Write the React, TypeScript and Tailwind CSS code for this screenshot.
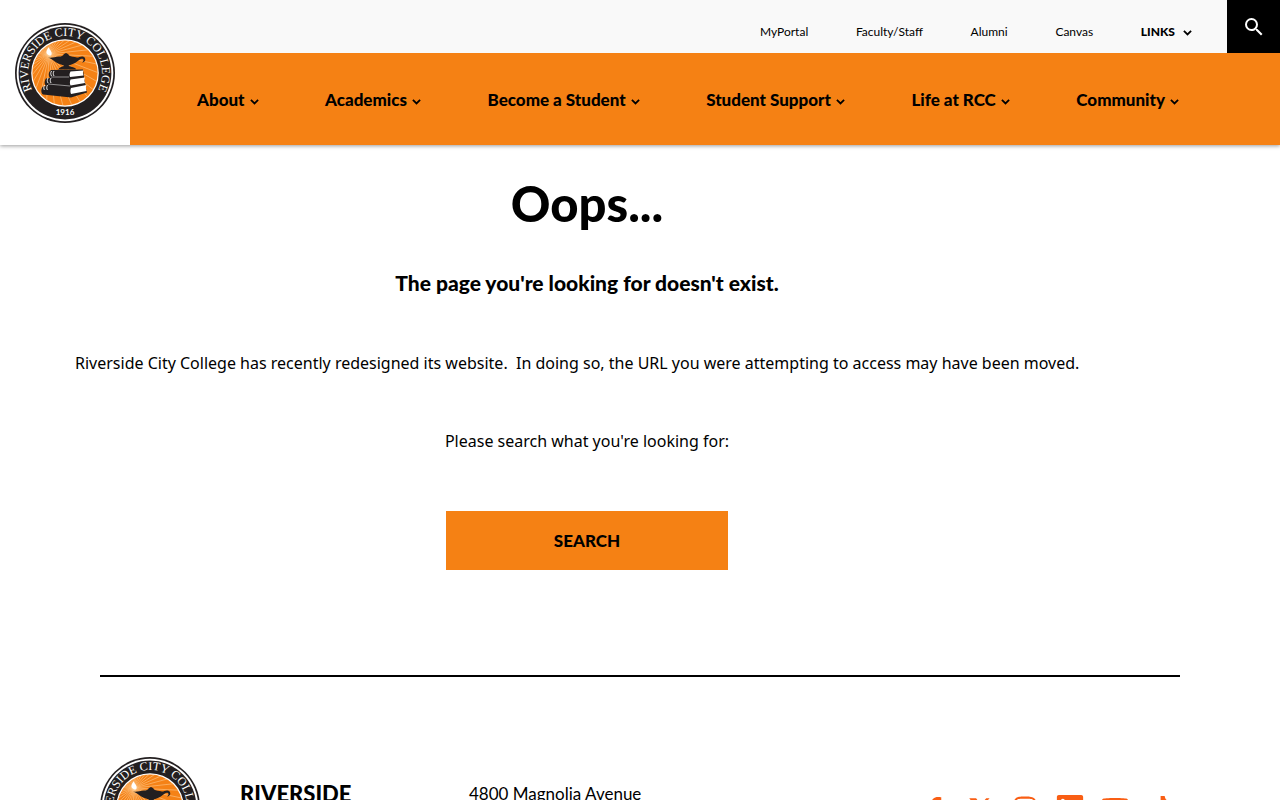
import { useId } from "react";
import { FaFacebookF, FaInstagram, FaLinkedin, FaTiktok, FaXTwitter, FaYoutube } from "react-icons/fa6";
import { MdSearch } from "react-icons/md";

const rays = Array.from({ length: 40 }, (_, i) => {
  const angle = (i * Math.PI * 2) / 40 + 0.05;
  return { x: 34 + Math.cos(angle) * 80, y: 31 + Math.sin(angle) * 80 };
});

function Seal() {
  const id = useId();
  return (
    <svg viewBox="0 0 100 100" className="size-[100px] shrink-0" role="img" aria-label="Riverside City College seal">
      <defs>
        <path id={`${id}-top`} d="M 24.3 76.600 A 37 37 0 1 1 75.700 76.600" />
        <clipPath id={`${id}-clip`}>
          <circle cx="50" cy="50" r="32.6" />
        </clipPath>
      </defs>
      <circle cx="50" cy="50" r="50" fill="#231f20" />
      <circle cx="50" cy="50" r="48.3" fill="#fff" />
      <circle cx="50" cy="50" r="46.4" fill="#231f20" />
      <circle cx="50" cy="50" r="33.8" fill="#fff" />
      <circle cx="50" cy="50" r="32.6" fill="#f58216" />
      <g clipPath={`url(#${id}-clip)`} stroke="#ffd6a5" strokeWidth="0.5">
        {rays.map((ray, i) => (
          <line key={i} x1="34" y1="31" x2={ray.x} y2={ray.y} />
        ))}
      </g>
      <g fill="#231f20">
        <path d="M33 34.500c4 .8 7-.8 11-1 2 0 3-.5 4-1 .5-1.500 1.500-1.800 3-2.500 1.500.7 2.500 1 3 2.500 2 1 5 1.500 8 2 2 0 4-1.800 6.500-.8 3 1.300 2 6-1.500 5.800 1.800-1.200 2.200-3 .5-3.700-3-.8-5 4-11 5.700-2 .5-3 1-3 1.500 3 .8 7 1.500 8 3.500H43c1-2 4-2.700 6-3.500 0-.5-1-1-3-1.500-6-1.500-8-5.500-13-7z" />
        <path d="M36 47l32-.5 1 7v2l1.500 6v2l1.500 6-16 5-28-3c-2.500-2-2-6 0-8l3-.5c-2-2-1.500-5.500 0-7.500l4-.5c-2-3-1.500-6 1-8z" />
      </g>
      <g fill="#fff">
        <path d="M34.500 32.500c-4-1.500-4-4.500-.5-8.500 0 3 3.500 4 2.500 7.500-.5 1-1 1-2 1z" />
        <path d="M55.500 48.500l13-1c-1 2-.5 3.500 0 5l-13.500 1.500c-.8-2-.5-3.500.5-5.500zM55.500 56.500l14.500-2c-1 2-.5 4 0 5.500l-14.500 2.500c-.8-2-.8-4 0-6zM56 65l15.500-3c-1 2-.5 4 0 6l-15.500 3c-.8-2-.8-4 0-6z" />
      </g>
      <g stroke="#fff" strokeWidth="0.9" fill="none">
        <path d="M36.500 48c-1 2-1 3 0 5M39 48c-1 2-1 3 0 5M33 55c-1 2-1 3 0 5M36 55c-1 2-1 3 0 5M29.500 62c-1 2-1 4 0 5M32.500 62c-1 2-1 4 0 5" />
        <path d="M36 54h18M33 61l22 2" strokeWidth="0.5" />
      </g>
      <g fill="#fff" textAnchor="middle" fontFamily="'Liberation Serif', serif">
        <text fontSize="12">
          <textPath href={`#${id}-top`} startOffset="50%">RIVERSIDE CITY COLLEGE</textPath>
        </text>
        <text x="50" y="92" fontSize="8" fontWeight="700" fontFamily="Lato, sans-serif">1916</text>
      </g>
    </svg>
  );
}

function Chevron() {
  return (
    <svg viewBox="0 0 9 6" className="mt-[3px] h-[6px] w-[9px] shrink-0" fill="none" stroke="currentColor" strokeWidth="1.8" aria-hidden="true">
      <path d="M0.900 0.900 4.500 4.500 8.100 0.900" />
    </svg>
  );
}

const topLinks = ["MyPortal", "Faculty/Staff", "Alumni", "Canvas"];
const menus = ["About", "Academics", "Become a Student", "Student Support", "Life at RCC", "Community"];
const socials = [
  { name: "Facebook", icon: <FaFacebookF size={22} /> },
  { name: "X", icon: <FaXTwitter size={24} /> },
  { name: "Instagram", icon: <FaInstagram size={26} /> },
  { name: "LinkedIn", icon: <FaLinkedin size={30} /> },
  { name: "YouTube", icon: <FaYoutube size={30} /> },
  { name: "TikTok", icon: <FaTiktok size={24} /> },
];

export default function App() {
  return (
    <div className="min-h-screen bg-white font-['Lato',sans-serif] text-black">
      <header className="flex shadow-[0_1px_4px_rgba(0,0,0,0.4)]">
        <a href="#home" className="flex w-[130px] shrink-0 items-center justify-center">
          <Seal />
        </a>
        <div className="flex-1">
          <div className="flex h-[53px] justify-end bg-[#f9f9f9]">
            <nav aria-label="Quick links" className="mr-[35px] flex w-[432px] items-center justify-between pt-[10px] text-xs">
              {topLinks.map((label) => (
                <a key={label} href="#top">{label}</a>
              ))}
              <button type="button" className="flex items-center gap-2 font-black">
                LINKS <Chevron />
              </button>
            </nav>
            <button type="button" aria-label="Search" className="flex w-[53px] items-center justify-center bg-black text-white">
              <MdSearch size={24} />
            </button>
          </div>
          <nav aria-label="Main" className="flex h-[92px] items-center justify-between bg-[#f58114] pt-[2px] pr-[101px] pl-[67px] text-[17px] font-black">
            {menus.map((label) => (
              <button key={label} type="button" className="flex items-center gap-[5px]">
                {label} <Chevron />
              </button>
            ))}
          </nav>
        </div>
      </header>

      <main className="pr-[181px] pl-[75px] text-center">
        <h1 className="pt-[30px] text-[49px] leading-[56px] font-black">Oops...</h1>
        <h2 className="mt-9 text-[21px] leading-8 font-black">The page you're looking for doesn't exist.</h2>
        <div className="font-['Noto_Sans',sans-serif] text-base leading-6">
          <p className="mt-[52px] text-left whitespace-pre-wrap">Riverside City College has recently redesigned its website.  In doing so, the URL you were attempting to access may have been moved.</p>
          <p className="mt-[54px]">Please search what you're looking for:</p>
        </div>
        <a href="#search" className="mx-auto mt-[58px] flex h-[59px] w-[282px] items-center justify-center bg-[#f58114] text-[17px] font-black">
          SEARCH
        </a>
      </main>

      <footer className="mx-[100px] mt-[105px] flex items-start border-t-2 border-black pt-20">
        <Seal />
        <p className="mt-[25px] ml-10 w-[229px] text-[22px] leading-6 font-black">RIVERSIDE</p>
        <address className="mt-[25px] text-[17px] leading-6 not-italic">4800 Magnolia Avenue</address>
        <div className="mt-9 ml-auto flex items-center gap-[19px] pr-[7px] text-[#f95e14]">
          {socials.map(({ name, icon }) => (
            <a key={name} href="#social" aria-label={name} className="flex h-[30px] w-[26px] items-center justify-center [&>svg]:shrink-0">{icon}</a>
          ))}
        </div>
      </footer>
    </div>
  );
}
